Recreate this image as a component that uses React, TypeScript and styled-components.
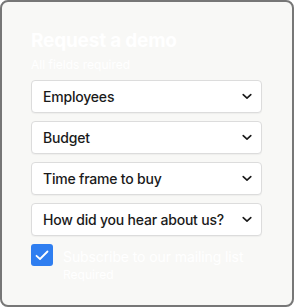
import styled, { createGlobalStyle } from "styled-components";

const GlobalStyle = createGlobalStyle`
  html, body {
    margin: 0;
    padding: 0;
    background: #ffffff;
  }
  * {
    box-sizing: border-box;
  }
`;

const Card = styled.form`
  width: 294px;
  height: 307px;
  padding: 27px 30px 0 29px;
  border: 2px solid #777777;
  border-radius: 8px;
  background-color: #f8f8f6;
  font-family: Inter, "Noto Sans", sans-serif;
`;

const Title = styled.h2`
  margin: 0;
  font-size: 19px;
  font-weight: 700;
  line-height: 24px;
  letter-spacing: -0.2px;
  color: #ffffff;
`;

const Subtitle = styled.p`
  margin: 4px 0 8px;
  font-size: 12px;
  line-height: 15px;
  color: #ffffff;
`;

const Fields = styled.div`
  display: flex;
  flex-direction: column;
  gap: 8px;
`;

const Select = styled.div`
  display: flex;
  align-items: center;
  justify-content: space-between;
  height: 33px;
  padding: 0 9px 0 11px;
  border: 1px solid #dcdcdc;
  border-radius: 4px;
  background-color: #ffffff;
  box-shadow: 0 1px 1px rgba(0, 0, 0, 0.04);
  font-size: 14px;
  font-weight: 500;
  letter-spacing: -0.2px;
  white-space: nowrap;
  color: #1a1a1a;
`;

const Chevron = () => (
  <svg width="10" height="7" viewBox="0 0 10 7" fill="none">
    <path
      d="M1.2 1.6L5 5.2L8.8 1.6"
      stroke="#1a1a1a"
      strokeWidth="1.6"
      strokeLinecap="round"
      strokeLinejoin="round"
    />
  </svg>
);

const CheckRow = styled.label`
  display: flex;
  gap: 10px;
  margin-top: 8px;
`;

const Box = styled.span`
  display: flex;
  align-items: center;
  justify-content: center;
  flex: none;
  width: 22px;
  height: 22px;
  border-radius: 3px;
  background-color: #2f7ef0;
`;

const CheckText = styled.div`
  padding-top: 4px;
  color: #ffffff;
`;

const CheckLabel = styled.div`
  font-size: 14px;
  line-height: 18px;
  letter-spacing: -0.1px;
`;

const Hint = styled.div`
  margin-top: 2px;
  font-size: 12px;
  line-height: 14px;
`;

const fields = [
  "Employees",
  "Budget",
  "Time frame to buy",
  "How did you hear about us?",
];

function App() {
  return (
    <>
      <GlobalStyle />
      <Card>
        <Title>Request a demo</Title>
        <Subtitle>All fields required</Subtitle>
        <Fields>
          {fields.map((f) => (
            <Select key={f}>
              {f}
              <Chevron />
            </Select>
          ))}
        </Fields>
        <CheckRow>
          <Box>
            <svg width="14" height="11" viewBox="0 0 14 11" fill="none">
              <path
                d="M1.5 5.8L5 9L12.5 1.5"
                stroke="#ffffff"
                strokeWidth="1.8"
                strokeLinecap="round"
                strokeLinejoin="round"
              />
            </svg>
          </Box>
          <CheckText>
            <CheckLabel>Subscribe to our mailing list</CheckLabel>
            <Hint>Required</Hint>
          </CheckText>
        </CheckRow>
      </Card>
    </>
  );
}

export default App;
